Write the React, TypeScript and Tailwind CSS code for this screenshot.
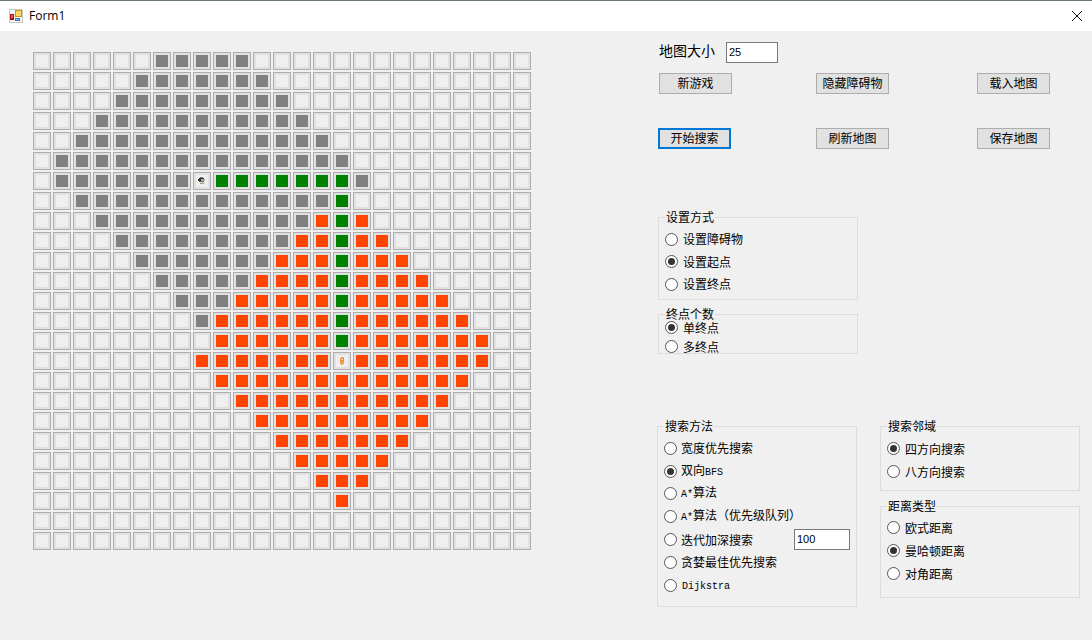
import React from "react";

type CellKind = "empty" | "wall" | "path" | "seen" | "start" | "end";
type Span = [number, number, CellKind];

const MAP_SIZE = 25;

// each row: [first col, last col, kind]
const ROWS: Span[][] = [
  [[6, 10, "wall"]],
  [[5, 11, "wall"]],
  [[4, 12, "wall"]],
  [[3, 13, "wall"]],
  [[2, 14, "wall"]],
  [[1, 15, "wall"]],
  [[1, 7, "wall"], [8, 8, "start"], [9, 15, "path"], [16, 16, "wall"]],
  [[2, 14, "wall"], [15, 15, "path"]],
  [[3, 13, "wall"], [14, 14, "seen"], [15, 15, "path"], [16, 16, "seen"]],
  [[4, 12, "wall"], [13, 14, "seen"], [15, 15, "path"], [16, 17, "seen"]],
  [[5, 11, "wall"], [12, 14, "seen"], [15, 15, "path"], [16, 18, "seen"]],
  [[6, 10, "wall"], [11, 14, "seen"], [15, 15, "path"], [16, 19, "seen"]],
  [[7, 9, "wall"], [10, 14, "seen"], [15, 15, "path"], [16, 20, "seen"]],
  [[8, 8, "wall"], [9, 14, "seen"], [15, 15, "path"], [16, 21, "seen"]],
  [[9, 14, "seen"], [15, 15, "path"], [16, 22, "seen"]],
  [[8, 14, "seen"], [15, 15, "end"], [16, 22, "seen"]],
  [[9, 21, "seen"]],
  [[10, 20, "seen"]],
  [[11, 19, "seen"]],
  [[12, 18, "seen"]],
  [[13, 17, "seen"]],
  [[14, 16, "seen"]],
  [[15, 15, "seen"]],
  [],
  [],
];

const kindAt = (row: number, col: number): CellKind => {
  const span = ROWS[row].find(([a, b]) => col >= a && col <= b);
  return span ? span[2] : "empty";
};

const INNER: Record<CellKind, string> = {
  empty: "bg-[#efefef]",
  wall: "bg-[#808080]",
  path: "bg-[#008000]",
  seen: "bg-[#ff4500]",
  start: "bg-[#efefef]",
  end: "bg-[#efefef]",
};

const Bird = () => (
  <svg width="12" height="12" viewBox="0 0 12 12" shapeRendering="crispEdges">
    <rect x="4" y="2" width="3" height="1" fill="#777" />
    <rect x="3" y="3" width="5" height="1" fill="#333" />
    <rect x="2" y="4" width="3" height="2" fill="#333" />
    <rect x="5" y="4" width="4" height="2" fill="#aaa" />
    <rect x="3" y="6" width="5" height="1" fill="#666" />
    <rect x="4" y="7" width="5" height="1" fill="#d8d8c8" />
    <rect x="4" y="8" width="4" height="1" fill="#9aa878" />
  </svg>
);

const Carrot = () => (
  <svg width="12" height="12" viewBox="0 0 12 12" shapeRendering="crispEdges">
    <rect x="5" y="2" width="3" height="1" fill="#e8a060" />
    <rect x="4" y="3" width="4" height="4" fill="#f09040" />
    <rect x="5" y="4" width="2" height="1" fill="#f8d0a0" />
    <rect x="4" y="7" width="4" height="2" fill="#f0a050" />
    <rect x="5" y="9" width="2" height="1" fill="#e8b080" />
  </svg>
);

const Cell = ({ kind }: { kind: CellKind }) => (
  <div className="w-[18px] h-[18px] border border-[#adadad] bg-[#e1e1e1] p-[2px]">
    <div className={`w-3 h-3 ${INNER[kind]}`}>
      {kind === "start" && <Bird />}
      {kind === "end" && <Carrot />}
    </div>
  </div>
);

const MapGrid = () => (
  <div className="grid grid-cols-[repeat(25,18px)] gap-[2px]">
    {ROWS.map((_, r) =>
      Array.from({ length: MAP_SIZE }, (_, c) => <Cell key={`${r}-${c}`} kind={kindAt(r, c)} />)
    )}
  </div>
);

const WinButton = ({ label, focused }: { label: string; focused?: boolean }) => (
  <button
    className={
      focused
        ? "w-[73px] h-[21px] -ml-px pb-[2px] bg-[#e1e1e1] border-2 border-[#0078d7] text-[12px] leading-none text-black"
        : "w-[73px] h-[21px] pb-[2px] bg-[#e1e1e1] border border-[#adadad] text-[12px] leading-none text-black"
    }
  >
    {label}
  </button>
);

const Radio = ({
  label,
  checked,
  rowClass,
  gapClass = "ml-[5px]",
  children,
}: {
  label: React.ReactNode;
  checked?: boolean;
  rowClass: string;
  gapClass?: string;
  children?: React.ReactNode;
}) => (
  <div className={`flex items-center ${rowClass}`}>
    <span className="w-[13px] h-[13px] shrink-0 rounded-full border border-[#555555] bg-white flex items-center justify-center">
      {checked && <span className="w-[7px] h-[7px] rounded-full bg-[#333333]" />}
    </span>
    <span className={`${gapClass} text-[12px] leading-[12px] bg-[#f0f0f0] text-black whitespace-nowrap`}>{label}</span>
    {children}
  </div>
);

const GroupBox = ({
  title,
  className,
  children,
}: {
  title: string;
  className: string;
  children: React.ReactNode;
}) => (
  <div className={`relative w-[200px] border border-[#dcdcdc] ${className}`}>
    <span className="absolute -top-[7px] left-[6px] px-px bg-[#f0f0f0] text-[12px] leading-[12px] text-black">
      {title}
    </span>
    {children}
  </div>
);

const Latin = ({ children }: { children: string }) => (
  <span className="font-['Liberation_Mono',monospace] text-[10px]">{children}</span>
);

const NumberBox = ({ value, className }: { value: string; className: string }) => (
  <div className={`h-[21px] border border-[#7a7a7a] bg-white pl-[2px] text-[11px] leading-[19px] text-black font-['Liberation_Sans',sans-serif] ${className}`}>
    {value}
  </div>
);

const FormIcon = () => (
  <svg width="14" height="14" viewBox="0 0 14 14" shapeRendering="crispEdges">
    <rect x="0" y="0" width="14" height="14" fill="#c8c8c8" />
    <rect x="1" y="1" width="12" height="12" fill="#f4f4f4" />
    <rect x="6" y="1" width="7" height="7" fill="#c89818" />
    <rect x="7" y="2" width="5" height="5" fill="#ffd860" />
    <rect x="1" y="5" width="4" height="6" fill="#a01818" />
    <rect x="2" y="6" width="2" height="3" fill="#f05040" />
    <rect x="6" y="9" width="5" height="3" fill="#3878d0" />
    <rect x="7" y="10" width="3" height="1" fill="#90c0f0" />
  </svg>
);

const App = () => {
  return (
    <div className="w-[1092px] h-[640px] overflow-hidden bg-[#f0f0f0] font-['Noto_Sans_CJK_SC','Noto_Sans',sans-serif]">
      {/* title bar */}
      <div className="h-[31px] bg-white border-t border-[#6d7b6d] flex items-center pl-[9px] pr-[10px]">
        <FormIcon />
        <span className="ml-[6px] text-[12px] text-black font-['Open_Sans',sans-serif]">Form1</span>
        <svg className="ml-auto" width="10" height="10" viewBox="0 0 10 10">
          <path d="M0 0L10 10M10 0L0 10" stroke="#111" strokeWidth="1" />
        </svg>
      </div>

      <div className="flex">
        <div className="pl-[33px] pt-[21px]">
          <MapGrid />
        </div>

        <div className="ml-[126px] pt-[11px] flex flex-col">
          <div className="flex items-center ml-[2px] h-[21px]">
            <span className="text-[14px] leading-none text-black w-[67px] pb-[5px]">地图大小</span>
            <NumberBox value="25" className="w-[52px]" />
          </div>

          <div className="mt-[10px] ml-[2px] grid grid-cols-[157px_161px_73px] gap-y-[34px]">
            <WinButton label="新游戏" />
            <WinButton label="隐藏障碍物" />
            <WinButton label="载入地图" />
            <WinButton label="开始搜索" focused />
            <WinButton label="刷新地图" />
            <WinButton label="保存地图" />
          </div>

          <GroupBox title="设置方式" className="ml-px mt-[68px] h-[83px] pl-[6px] pt-[10px]">
            <Radio label="设置障碍物" rowClass="h-[22.5px]" />
            <Radio label="设置起点" checked rowClass="h-[22.5px]" />
            <Radio label="设置终点" rowClass="h-[22.5px]" />
          </GroupBox>

          <GroupBox title="终点个数" className="ml-px mt-[14px] h-[40px] pl-[6px] pt-[3px]">
            <Radio label="单终点" checked rowClass="h-[19px]" />
            <Radio label="多终点" rowClass="h-[19px]" />
          </GroupBox>

          <div className="mt-[72px] flex gap-[23px]">
            <GroupBox title="搜索方法" className="h-[181px] pl-[6px] pt-[10px]">
              <Radio label="宽度优先搜索" rowClass="h-[22.8px]" gapClass="ml-[4px]" />
              <Radio
                label={<>双向<Latin>BFS</Latin></>}
                checked
                rowClass="h-[22.8px]"
                gapClass="ml-[4px]"
              />
              <Radio label={<><Latin>A*</Latin>算法</>} rowClass="h-[22.8px]" gapClass="ml-[4px]" />
              <Radio label={<><Latin>A*</Latin>算法（优先级队列）</>} rowClass="h-[22.8px]" gapClass="ml-[4px]" />
              <Radio label="迭代加深搜索" rowClass="h-[22.8px]" gapClass="ml-[4px]">
                <NumberBox value="100" className="ml-auto mr-[6px] w-[56px]" />
              </Radio>
              <Radio label="贪婪最佳优先搜索" rowClass="h-[22.8px]" gapClass="ml-[4px]" />
              <Radio label={<Latin>Dijkstra</Latin>} rowClass="h-[22.8px]" />
            </GroupBox>

            <div className="flex flex-col gap-[15px]">
              <GroupBox title="搜索邻域" className="h-[65px] pl-[6px] pt-[10px]">
                <Radio label="四方向搜索" checked rowClass="h-[23px]" />
                <Radio label="八方向搜索" rowClass="h-[23px]" />
              </GroupBox>
              <GroupBox title="距离类型" className="h-[92px] pl-[6px] pt-[9px]">
                <Radio label="欧式距离" rowClass="h-[23px]" />
                <Radio label="曼哈顿距离" checked rowClass="h-[23px]" />
                <Radio label="对角距离" rowClass="h-[23px]" />
              </GroupBox>
            </div>
          </div>
        </div>
      </div>
    </div>
  );
};

export default App;
